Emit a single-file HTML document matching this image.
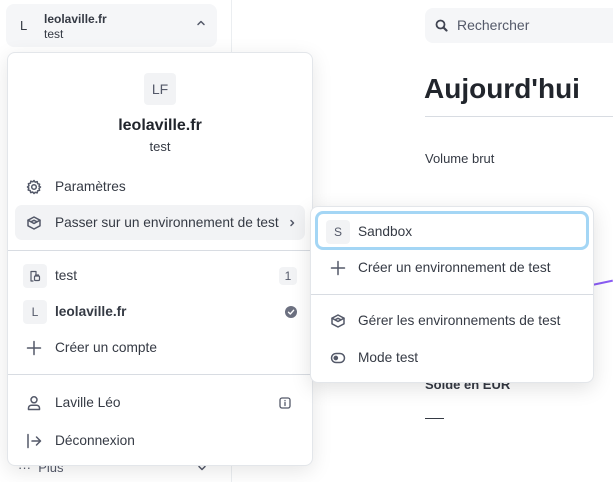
<!DOCTYPE html>
<html><head><meta charset="utf-8"><style>
*{box-sizing:border-box;margin:0;padding:0}
body{width:613px;height:482px;overflow:hidden;background:#fff;font-family:"Liberation Sans",sans-serif;color:#353a44;position:relative;font-size:14px}
.abs{position:absolute}
.sb{left:231px;top:0;width:1px;height:482px;background:#ebeef1}
.topbtn{left:6px;top:4px;width:211px;height:43px;background:#f5f6f8;border-radius:8px}
.menu{left:7px;top:52px;width:306px;height:414px;background:#fff;border:1px solid #e3e6ea;border-radius:8px;box-shadow:0 5px 20px rgba(0,0,0,.10)}
.sub{left:310px;top:206px;width:284px;height:177px;background:#fff;border:1px solid #e3e6ea;border-radius:8px;box-shadow:0 5px 20px rgba(0,0,0,.12)}
.t{position:absolute;white-space:nowrap}
.m{font-size:13.7px}
svg{position:absolute;fill:none;stroke:#545969;stroke-width:1.5;stroke-linecap:round;stroke-linejoin:round}
.hr{position:absolute;height:1px;background:#d8dce2}
.sq{position:absolute;background:#f2f3f5;border-radius:4px;text-align:center;color:#545969}
</style></head><body>
<div class="abs sb"></div>
<div class="abs topbtn"></div>
<div class="t" style="left:20px;top:18px;font-size:13px;color:#353a44">L</div>
<div class="t" style="left:44px;top:12px;font-size:12px;font-weight:bold;color:#353a44">leolaville.fr</div>
<div class="t" style="left:44px;top:27px;font-size:12px">test</div>
<svg style="left:196px;top:19px" width="10" height="8" viewBox="0 0 10 8"><path d="M2 5.5L5 2.5L8 5.5"/></svg>

<div class="t" style="left:18px;top:460px;font-size:13px;color:#545969">··· &nbsp;Plus</div>
<svg style="left:197px;top:464px" width="10" height="8" viewBox="0 0 10 8"><path d="M2 2.5L5 5.5L8 2.5"/></svg>

<!-- main -->
<div class="abs" style="left:425px;top:8px;width:200px;height:35px;background:#f5f6f8;border-radius:8px"></div>
<svg style="left:435px;top:19px;stroke:#414552" width="13" height="13" viewBox="0 0 13 13"><circle cx="5.5" cy="5.5" r="4" stroke-width="1.8"/><path d="M8.5 8.5L11.5 11.5" stroke-width="2.2"/></svg>
<div class="t" style="left:457px;top:17px;font-size:14px;color:#545969">Rechercher</div>
<div class="t" style="left:424px;top:73px;font-size:28px;font-weight:bold;color:#21252c">Aujourd'hui</div>
<div class="hr" style="left:425px;top:116px;width:188px"></div>
<div class="t" style="left:425px;top:151px;font-size:13px">Volume brut</div>
<div class="t" style="left:425px;top:377px;font-size:13px;font-weight:bold">Solde en EUR</div>
<div class="abs" style="left:425px;top:418px;width:19px;height:1px;background:#353a44"></div>
<div class="abs" style="left:590px;top:282px;width:23px;height:2px;background:#8a5cf5;transform:rotate(-12deg)"></div>

<!-- menu -->
<div class="abs menu"></div>
<div class="sq" style="left:144px;top:73px;width:32px;height:32px;line-height:32px;font-size:14px">LF</div>
<div class="t" style="left:0;width:320px;text-align:center;top:117px;font-size:16px;font-weight:bold;color:#21252c">leolaville.fr</div>
<div class="t" style="left:0;width:320px;text-align:center;top:139px;font-size:13px">test</div>

<svg style="left:26px;top:179px" width="16" height="16" viewBox="0 0 16 16"><circle cx="8" cy="8" r="2.3"/><path d="M8 1.5l1.2 1.7 2-.6.4 2 2 .6-.6 2L14.5 8l-1.5 1.3.6 2-2 .6-.4 2-2-.6L8 14.5l-1.3-1.5-2 .6-.5-2-2-.6.6-2L1.5 8l1.5-1.3-.6-2 2-.5.5-2 2 .6z"/></svg>
<div class="t m" style="left:55px;top:179px">Paramètres</div>
<div class="abs" style="left:15px;top:205px;width:290px;height:35px;background:#f2f3f5;border-radius:7px"></div>
<svg style="left:26px;top:215px" width="16" height="16" viewBox="0 0 16 16"><path d="M8 2L14 5.2V10.8L8 14 2 10.8V5.2z"/><path d="M2 5.2L8 8.5 14 5.2M5 6.8L8 5.3 11 6.8 8 8.5"/></svg>
<div class="t m" style="left:55px;top:215px">Passer sur un environnement de test</div>
<svg style="left:288px;top:219px" width="8" height="8" viewBox="0 0 8 8"><path d="M3 1.5L5.5 4 3 6.5"/></svg>
<div class="hr" style="left:8px;top:250px;width:304px"></div>

<div class="sq" style="left:23px;top:264px;width:24px;height:24px"></div>
<svg style="left:29px;top:270px;stroke-width:1.2" width="12" height="12" viewBox="0 0 12 12"><path d="M4 11H2V1.5h5V4"/><rect x="5.5" y="6" width="5" height="4.5" rx="1"/><path d="M6.5 6V5h3v1"/></svg>
<div class="t m" style="left:55px;top:268px">test</div>
<div class="sq" style="left:279px;top:267px;width:18px;height:18px;line-height:18px;font-size:12px">1</div>

<div class="sq" style="left:23px;top:300px;width:24px;height:24px;line-height:24px;font-size:12px">L</div>
<div class="t m" style="left:55px;top:304px;font-weight:bold">leolaville.fr</div>
<div class="abs" style="left:285px;top:306px;width:12px;height:12px;border-radius:50%;background:#6c7080"></div>
<svg style="left:285px;top:306px;stroke:#fff;stroke-width:1.4" width="12" height="12" viewBox="0 0 12 12"><path d="M3.5 6.2L5.3 8 8.6 4.3"/></svg>

<svg style="left:26px;top:340px" width="16" height="16" viewBox="0 0 16 16"><path d="M8 1.5V14.5M1.5 8H14.5"/></svg>
<div class="t m" style="left:55px;top:340px">Créer un compte</div>
<div class="hr" style="left:8px;top:374px;width:304px"></div>

<svg style="left:26px;top:395px" width="16" height="16" viewBox="0 0 16 16"><circle cx="8" cy="4.8" r="3"/><path d="M2.5 14.5v-1.5c0-1.5 1.3-2.8 3-2.8h5c1.7 0 3 1.3 3 2.8v1.5z"/></svg>
<div class="t m" style="left:55px;top:395px">Laville Léo</div>
<svg style="left:279px;top:397px;stroke-width:1.3" width="12" height="12" viewBox="0 0 12 12"><rect x="1" y="1" width="10" height="10" rx="2"/><path d="M6 3.5v.2M6 5.5v3"/></svg>

<svg style="left:26px;top:433px" width="16" height="16" viewBox="0 0 16 16"><path d="M2 1.5V14.5M6 8H14.5M10.5 4L14.5 8 10.5 12"/></svg>
<div class="t m" style="left:55px;top:433px">Déconnexion</div>

<!-- submenu -->
<div class="abs sub"></div>
<div class="abs" style="left:315px;top:211px;width:274px;height:39px;border:3px solid #a4d6f5;border-radius:8px;background:#fff"></div>
<div class="sq" style="left:326px;top:220px;width:24px;height:24px;line-height:24px;font-size:12px">S</div>
<div class="t m" style="left:358px;top:224px">Sandbox</div>
<svg style="left:330px;top:260px" width="16" height="16" viewBox="0 0 16 16"><path d="M8 1.5V14.5M1.5 8H14.5"/></svg>
<div class="t m" style="left:358px;top:260px">Créer un environnement de test</div>
<div class="hr" style="left:311px;top:294px;width:282px"></div>
<svg style="left:330px;top:313px" width="16" height="16" viewBox="0 0 16 16"><path d="M8 2L14 5.2V10.8L8 14 2 10.8V5.2z"/><path d="M2 5.2L8 8.5 14 5.2M5 6.8L8 5.3 11 6.8 8 8.5"/></svg>
<div class="t m" style="left:358px;top:313px">Gérer les environnements de test</div>
<svg style="left:330px;top:350px" width="16" height="16" viewBox="0 0 16 16"><rect x="1.5" y="3.5" width="13" height="9" rx="4.5"/><circle cx="5.8" cy="8" r="1.6" fill="#545969"/></svg>
<div class="t m" style="left:358px;top:350px">Mode test</div>
</body></html>
